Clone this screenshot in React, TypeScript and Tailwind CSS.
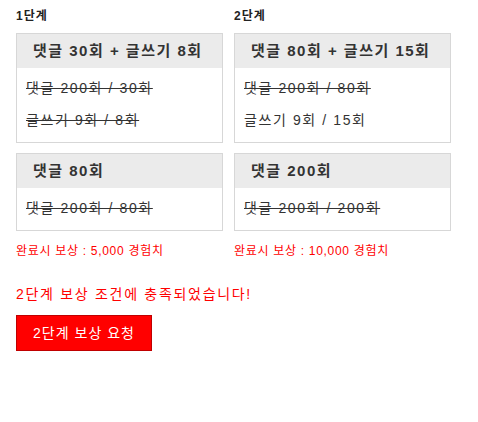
const FONT = "font-['Liberation_Sans','Noto_Sans_CJK_KR',sans-serif]";

type Row = { text: string; done: boolean };
type Mission = { title: string; rows: Row[] };
type Stage = { label: string; width: string; missions: Mission[]; reward: string };

const stages: Stage[] = [
  {
    label: "1단계",
    width: "w-[207px]",
    reward: "완료시 보상 : 5,000 경험치",
    missions: [
      {
        title: "댓글 30회 + 글쓰기 8회",
        rows: [
          { text: "댓글 200회 / 30회", done: true },
          { text: "글쓰기 9회 / 8회", done: true },
        ],
      },
      { title: "댓글 80회", rows: [{ text: "댓글 200회 / 80회", done: true }] },
    ],
  },
  {
    label: "2단계",
    width: "w-[217px]",
    reward: "완료시 보상 : 10,000 경험치",
    missions: [
      {
        title: "댓글 80회 + 글쓰기 15회",
        rows: [
          { text: "댓글 200회 / 80회", done: true },
          { text: "글쓰기 9회 / 15회", done: false },
        ],
      },
      { title: "댓글 200회", rows: [{ text: "댓글 200회 / 200회", done: true }] },
    ],
  },
];

function MissionBox({ mission }: { mission: Mission }) {
  return (
    <div className="border border-[#d7d7d7] bg-white">
      <div className="h-[34px] bg-[#ebebeb] pl-4 flex items-center text-[15px] font-bold tracking-[1.5px] text-[#333] whitespace-nowrap">
        {mission.title}
      </div>
      <div className="pt-1 pb-[6px] pl-[9px]">
        {mission.rows.map((r) => (
          <div
            key={r.text}
            className={`h-8 flex items-center text-[14px] tracking-[1.6px] text-[#333] whitespace-nowrap ${r.done ? "line-through" : ""}`}
          >
            {r.text}
          </div>
        ))}
      </div>
    </div>
  );
}

export default function App() {
  return (
    <div className={`${FONT} bg-white w-[478px] h-[422px] pl-4 pt-[8px]`}>
      <div className="flex gap-[11px]">
        {stages.map((s) => (
          <div key={s.label} className={`${s.width} flex flex-col`}>
            <div className="h-[17px] text-[12px] font-bold tracking-[1px] text-[#222] leading-[17px]">
              {s.label}
            </div>
            <div className="mt-[8px] flex flex-col gap-[10px]">
              {s.missions.map((m) => (
                <MissionBox key={m.title} mission={m} />
              ))}
            </div>
            <div className="mt-[12px] text-[12px] leading-[16px] tracking-[0.7px] text-[#ff0000] whitespace-nowrap">
              {s.reward}
            </div>
          </div>
        ))}
      </div>
      <div className="mt-[26px] text-[14px] leading-[18px] tracking-[1.7px] text-[#ff0000]">
        2단계 보상 조건에 충족되었습니다!
      </div>
      <button className="mt-[12px] w-[136px] h-[36px] bg-[#ff0000] border border-[#c00000] text-white text-[14px] tracking-[1px]">
        2단계 보상 요청
      </button>
    </div>
  );
}
